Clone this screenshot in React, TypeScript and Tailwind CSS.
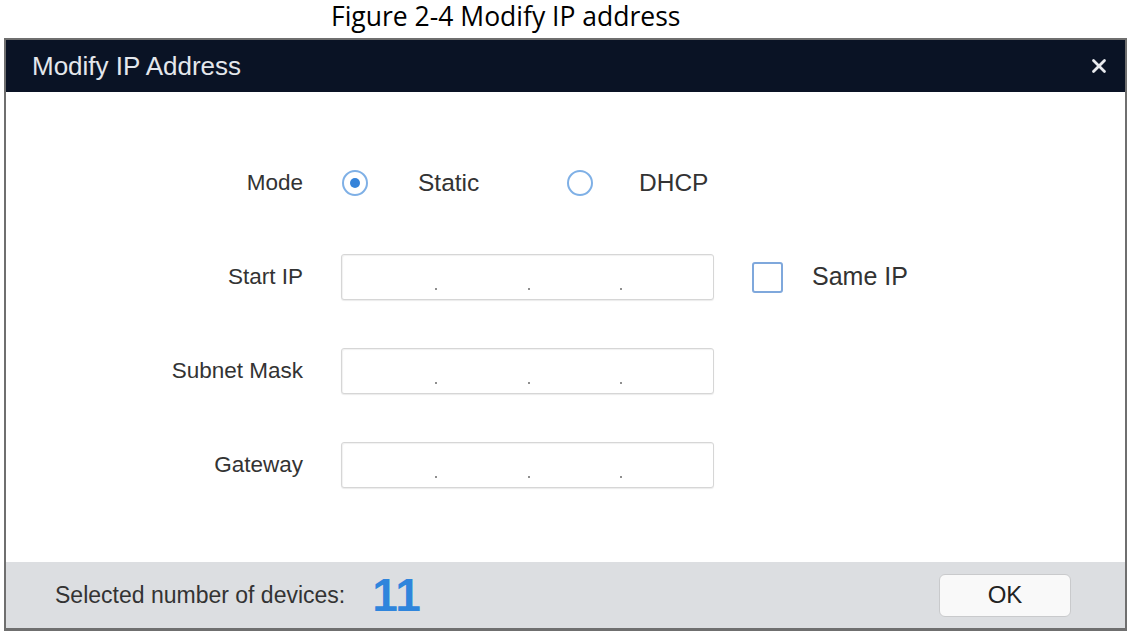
import { X } from 'lucide-react';

const fieldRows = ['Start IP', 'Subnet Mask', 'Gateway'];

const IpInput = () => (
  <div className="flex h-[46px] w-[373px] items-end rounded-[3px] border border-[#d6d6d6] bg-white pb-[9px] shadow-[inset_1px_1px_1px_rgba(0,0,0,0.06),0_1px_1px_rgba(0,0,0,0.08)]">
    {[0, 1, 2, 3].map((i) => (
      <div key={i} className="flex flex-1 justify-end">
        {i < 3 && <span className="mr-[-2px] h-[2px] w-[2px] bg-[#8f8f8f]" />}
      </div>
    ))}
  </div>
);

const Radio = ({ checked }: { checked?: boolean }) => (
  <span className="flex h-[26px] w-[26px] items-center justify-center rounded-full border-2 border-[#7fb0e6] bg-white">
    {checked && <span className="h-[10px] w-[10px] rounded-full bg-[#3583d9]" />}
  </span>
);

export default function App() {
  return (
    <div className="h-[639px] w-[1132px] bg-white font-['Liberation_Sans',Arial,sans-serif] text-[#333]">
      {/* Figure caption */}
      <div className="flex h-[38px] items-start pl-[331px] font-['Open_Sans',sans-serif] text-[26.5px] leading-[33px] text-black">
        Figure 2-4 Modify IP address
      </div>

      {/* Dialog */}
      <div className="ml-[4px] w-[1123px] border-2 border-b-[3px] border-[#6f6f6f]">
        <div className="flex h-[52px] items-center justify-between bg-[#0a1325] pl-[26px] pr-[15px]">
          <span className="text-[26px] text-[#e4e7ec]">Modify IP Address</span>
          <X className="h-[22px] w-[22px] text-[#e8eaee]" strokeWidth={3} />
        </div>

        <div className="flex h-[470px] flex-col gap-[48px] bg-white pt-[68px]">
          <div className="flex h-[46px] items-center">
            <span className="w-[297px] text-right text-[22.5px]">Mode</span>
            <div className="ml-[38px] flex items-center">
              <div className="flex w-[226px] items-center pl-[1px]">
                <Radio checked />
                <span className="ml-[50px] text-[24.5px]">Static</span>
              </div>
              <div className="flex items-center">
                <Radio />
                <span className="ml-[46px] text-[24.5px]">DHCP</span>
              </div>
            </div>
          </div>

          {fieldRows.map((label, i) => (
            <div key={label} className="flex h-[46px] items-center">
              <span className="w-[297px] text-right text-[22.5px]">{label}</span>
              <div className="ml-[38px] flex items-center">
                <IpInput />
                {i === 0 && (
                  <>
                    <span className="ml-[38px] h-[31px] w-[31px] rounded-[3px] border-2 border-[#7fa8dc] bg-white" />
                    <span className="ml-[29px] text-[25px]">Same IP</span>
                  </>
                )}
              </div>
            </div>
          ))}
        </div>

        <div className="flex h-[66px] items-center justify-between bg-[#dcdee1] pl-[49px] pr-[54px]">
          <div className="flex items-center">
            <span className="text-[23px]">Selected number of devices:</span>
            <span className="ml-[27px] text-[46px] font-bold leading-none text-[#2f85dc]">11</span>
          </div>
          <button className="h-[43px] w-[132px] rounded-[6px] border border-[#c9cacc] bg-[#f9f9f9] text-[24px] text-[#222]">
            OK
          </button>
        </div>
      </div>
    </div>
  );
}
